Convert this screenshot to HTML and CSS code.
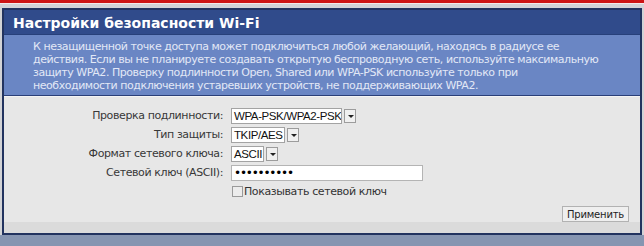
FILE: index.html
```html
<!DOCTYPE html>
<html lang="ru">
<head>
    <meta charset="UTF-8">
    <title>Настройки безопасности Wi-Fi</title>
    <link rel="stylesheet" href="styles.css">
</head>
<body>
    <div class="top-bar"></div>
    <div class="page">
        <div class="panel">
            <div class="panel-title">Настройки безопасности Wi-Fi</div>
            <div class="panel-desc">
                К незащищенной точке доступа может подключиться любой желающий, находясь в радиусе ее<br>
                действия. Если вы не планируете создавать открытую беспроводную сеть, используйте максимальную<br>
                защиту WPA2. Проверку подлинности Open, Shared или WPA-PSK используйте только при<br>
                необходимости подключения устаревших устройств, не поддерживающих WPA2.
            </div>
            <div class="panel-body">
                <div class="form-grid">
                    <div class="label">Проверка подлинности:</div>
                    <div class="field">
                        <span class="select w-auth">WPA-PSK/WPA2-PSK</span><span class="arrow"></span>
                    </div>

                    <div class="label">Тип защиты:</div>
                    <div class="field">
                        <span class="select w-enc">TKIP/AES</span><span class="arrow"></span>
                    </div>

                    <div class="label">Формат сетевого ключа:</div>
                    <div class="field">
                        <span class="select w-fmt">ASCII</span><span class="arrow"></span>
                    </div>

                    <div class="label">Сетевой ключ (ASCII):</div>
                    <div class="field">
                        <span class="text-input">••••••••••</span>
                    </div>

                    <div></div>
                    <div class="field">
                        <span class="checkbox"></span>
                        <span class="check-label">Показывать сетевой ключ</span>
                    </div>
                </div>
                <div class="actions">
                    <button class="apply">Применить</button>
                </div>
            </div>
            <div class="panel-foot"></div>
        </div>
    </div>
    <div class="bottom-bar"></div>
</body>
</html>
```

FILE: styles.css
```css
body {
    margin: 0;
    width: 644px;
    height: 246px;
    overflow: hidden;
    background-color: #d2d3d6;
    font-family: "DejaVu Sans", Verdana, sans-serif;
}
.top-bar {
    height: 3px;
    background-color: #cc1414;
    border-bottom: 1px solid #f2eaea;
}
.page {
    padding: 4px 2px 0 2px;
}
.panel {
    border: 2px solid #22335f;
    background-color: #e7e7e7;
}
.panel-title {
    height: 24px;
    line-height: 27px;
    padding-left: 9px;
    background-color: #304b8b;
    color: #ffffff;
    font-size: 14px;
    font-weight: bold;
    border-bottom: 1px solid #27407a;
}
.panel-desc {
    padding: 5px 10px 3px 29px;
    background-color: #6a86c4;
    color: #e2e8f6;
    font-size: 11px;
    line-height: 13px;
    letter-spacing: -0.45px;
    white-space: nowrap;
    border-bottom: 1px solid #2a3f78;
}
.panel-body {
    padding-top: 11px;
    border-top: 1px solid #f4f4f4;
}
.form-grid {
    display: grid;
    grid-template-columns: 219px auto;
    column-gap: 8px;
    row-gap: 4px;
    align-items: center;
}
.label {
    text-align: right;
    font-size: 11px;
    letter-spacing: -0.4px;
    color: #383838;
    height: 15px;
    line-height: 15px;
}
.field {
    display: flex;
    align-items: center;
    height: 15px;
}
.select {
    box-sizing: border-box;
    height: 16px;
    padding-left: 2px;
    background-color: #ffffff;
    border: 1px solid #a3a3a3;
    font-family: "Liberation Sans", Arial, sans-serif;
    font-size: 11.5px;
    letter-spacing: -0.4px;
    line-height: 14px;
    color: #111111;
    white-space: nowrap;
    overflow: hidden;
}
.w-auth { width: 111px; }
.w-enc { width: 54px; }
.w-fmt { width: 33px; }
.arrow {
    box-sizing: border-box;
    width: 12px;
    height: 14px;
    margin-left: 2px;
    background-color: #f0f0f0;
    border: 1px solid #9c9c9c;
    position: relative;
}
.arrow::after {
    content: "";
    position: absolute;
    left: 3px;
    top: 5px;
    border-left: 3px solid transparent;
    border-right: 3px solid transparent;
    border-top: 3px solid #222222;
}
.text-input {
    box-sizing: border-box;
    width: 192px;
    height: 16px;
    padding-left: 2px;
    background-color: #ffffff;
    border: 1px solid #b4b4b4;
    font-size: 12px;
    line-height: 14px;
    letter-spacing: -1.2px;
    color: #000000;
}
.checkbox {
    box-sizing: border-box;
    width: 11px;
    height: 11px;
    margin-left: 1px;
    background-color: #ececec;
    border: 1px solid #9a9a9a;
}
.check-label {
    margin-left: 1px;
    font-size: 11px;
    letter-spacing: -0.4px;
    color: #333333;
}
.actions {
    display: flex;
    justify-content: flex-end;
    padding: 7px 11px 0 0;
}
.apply {
    box-sizing: border-box;
    width: 67px;
    height: 16px;
    padding: 0;
    background-color: #efefef;
    border: 1px solid #b2b2b2;
    font-family: "DejaVu Sans", Verdana, sans-serif;
    font-size: 10px;
    letter-spacing: -0.2px;
    color: #222222;
    line-height: 13px;
}
.panel-foot {
    height: 11px;
    background-color: #dbdbdb;
}
.bottom-bar {
    height: 12px;
    background-color: #8695b1;
}
```
